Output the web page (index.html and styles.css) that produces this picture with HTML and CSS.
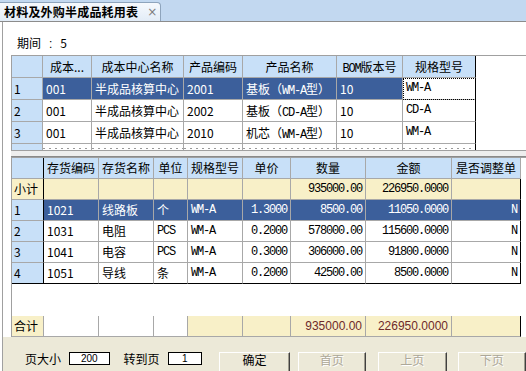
FILE: index.html
```html
<!DOCTYPE html>
<html lang="zh-CN">
<head>
    <meta charset="UTF-8">
    <title>材料及外购半成品耗用表</title>
    <link rel="stylesheet" href="styles.css">
</head>
<body>
<div class="tabbar">
    <div class="tab">
        <span class="tab-title">材料及外购半成品耗用表</span>
        <span class="tab-close">×</span>
    </div>
</div>

<div class="panel">
    <div class="period">期间<span class="colon">:</span>5</div>

    <div class="grid top">
        <div class="row head">
            <div class="cell"></div>
            <div class="cell">成本...</div>
            <div class="cell">成本中心名称</div>
            <div class="cell">产品编码</div>
            <div class="cell">产品名称</div>
            <div class="cell"><span class="mono">BOM</span>版本号</div>
            <div class="cell last">规格型号</div>
        </div>
        <div class="row selected">
            <div class="cell rh">1</div>
            <div class="cell">001</div>
            <div class="cell">半成品核算中心</div>
            <div class="cell">2001</div>
            <div class="cell">基板（<span class="mono">WM-A</span>型）</div>
            <div class="cell">10</div>
            <div class="cell last focus mono">WM-A</div>
        </div>
        <div class="row">
            <div class="cell rh">2</div>
            <div class="cell">001</div>
            <div class="cell">半成品核算中心</div>
            <div class="cell">2002</div>
            <div class="cell">基板（<span class="mono">CD-A</span>型）</div>
            <div class="cell">10</div>
            <div class="cell last mono">CD-A</div>
        </div>
        <div class="row">
            <div class="cell rh">3</div>
            <div class="cell">001</div>
            <div class="cell">半成品核算中心</div>
            <div class="cell">2010</div>
            <div class="cell">机芯（<span class="mono">WM-A</span>型）</div>
            <div class="cell">10</div>
            <div class="cell last mono">WM-A</div>
        </div>
        <div class="row peek">
            <div class="cell rh"></div>
            <div class="cell"></div>
            <div class="cell"></div>
            <div class="cell"></div>
            <div class="cell"></div>
            <div class="cell"></div>
            <div class="cell last"></div>
        </div>
    </div>

    <div class="splitter"></div>

    <div class="grid bottom">
        <div class="row head">
            <div class="cell rh"></div>
            <div class="cell">存货编码</div>
            <div class="cell">存货名称</div>
            <div class="cell">单位</div>
            <div class="cell">规格型号</div>
            <div class="cell">单价</div>
            <div class="cell">数量</div>
            <div class="cell">金额</div>
            <div class="cell">是否调整单</div>
        </div>
        <div class="row subtotal">
            <div class="cell rh">小计</div>
            <div class="cell"></div>
            <div class="cell"></div>
            <div class="cell"></div>
            <div class="cell"></div>
            <div class="cell"></div>
            <div class="cell num mono">935000.00</div>
            <div class="cell num mono">226950.0000</div>
            <div class="cell last"></div>
        </div>
        <div class="row selected">
            <div class="cell rh">1</div>
            <div class="cell">1021</div>
            <div class="cell">线路板</div>
            <div class="cell">个</div>
            <div class="cell mono">WM-A</div>
            <div class="cell num mono">1.3000</div>
            <div class="cell num mono">8500.00</div>
            <div class="cell num mono">11050.0000</div>
            <div class="cell num mono last">N</div>
        </div>
        <div class="row">
            <div class="cell rh">2</div>
            <div class="cell">1031</div>
            <div class="cell">电阻</div>
            <div class="cell mono">PCS</div>
            <div class="cell mono">WM-A</div>
            <div class="cell num mono">0.2000</div>
            <div class="cell num mono">578000.00</div>
            <div class="cell num mono">115600.0000</div>
            <div class="cell num mono last">N</div>
        </div>
        <div class="row">
            <div class="cell rh">3</div>
            <div class="cell">1041</div>
            <div class="cell">电容</div>
            <div class="cell mono">PCS</div>
            <div class="cell mono">WM-A</div>
            <div class="cell num mono">0.3000</div>
            <div class="cell num mono">306000.00</div>
            <div class="cell num mono">91800.0000</div>
            <div class="cell num mono last">N</div>
        </div>
        <div class="row end">
            <div class="cell rh">4</div>
            <div class="cell">1051</div>
            <div class="cell">导线</div>
            <div class="cell">条</div>
            <div class="cell mono">WM-A</div>
            <div class="cell num mono">0.2000</div>
            <div class="cell num mono">42500.00</div>
            <div class="cell num mono">8500.0000</div>
            <div class="cell num mono last">N</div>
        </div>

        <div class="spacer"></div>

        <div class="row total">
            <div class="cell rh">合计</div>
            <div class="cell blank"></div>
            <div class="cell blank"></div>
            <div class="cell blank"></div>
            <div class="cell"></div>
            <div class="cell"></div>
            <div class="cell num">935000.00</div>
            <div class="cell num">226950.0000</div>
            <div class="cell last"></div>
        </div>
    </div>

    <div class="pager">
        <span class="label">页大小</span>
        <span class="box size">200</span>
        <span class="label goto">转到页</span>
        <span class="box page">1</span>
        <span class="btn ok">确定</span>
        <span class="btn off first">首页</span>
        <span class="btn off prev">上页</span>
        <span class="btn off next">下页</span>
    </div>
</div>
</body>
</html>
```

FILE: styles.css
```css
body {
    margin: 0;
    width: 526px;
    height: 371px;
    overflow: hidden;
    background: #fff;
    font-family: "Noto Sans CJK SC", sans-serif;
    font-size: 12px;
    color: #000;
}

.tabbar {
    height: 21px;
    background: #c2d8f0;
    border-bottom: 1px solid #8c8c8c;
    display: flex;
    align-items: flex-end;
}
.tab {
    width: 161px;
    height: 19px;
    box-sizing: border-box;
    padding-left: 4px;
    background: linear-gradient(#f6f9fd, #e2ecf7);
    border: 1px solid #8ea4bc;
    border-left: none;
    border-bottom: none;
    border-radius: 0 4px 0 0;
    display: flex;
    align-items: center;
}
.tab-title {
    font-weight: bold;
    line-height: 16px;
    letter-spacing: 0.2px;
}
.tab-close {
    margin-left: 9px;
    color: #7d7d7d;
    font-family: "DejaVu Sans", sans-serif;
    font-size: 12px;
    line-height: 16px;
}

.panel {
    margin-left: 2px;
    border-left: 1px solid #a0a0a0;
    height: 349px;
    display: flex;
    flex-direction: column;
}
.period {
    height: 33px;
    box-sizing: border-box;
    padding: 13px 0 0 14px;
    line-height: 16px;
}
.period .colon {
    font-family: "Liberation Sans", sans-serif;
    margin: 0 8px 0 8px;
}

.grid {
    margin-left: 8px;
    border-top: 1px solid #a0a0a0;
    border-left: 1px solid #a0a0a0;
    overflow: hidden;
    background: #fff;
}
.grid.top {
    height: 95px;
    box-sizing: border-box;
}
.grid.bottom {
    height: 180px;
    box-sizing: border-box;
    display: flex;
    flex-direction: column;
}

.row {
    display: grid;
    height: 22px;
}
.top .row {
    grid-template-columns: 31px 49px 92px 59px 94px 66px 73px;
}
.top .row.peek {
    height: 6px;
}
.top .peek .cell {
    border-bottom: none;
    background-image: radial-gradient(circle, #999 0.6px, transparent 0.8px);
    background-size: 6px 3px;
    background-position: 4px 3px;
    background-repeat: repeat-x;
}
.top .peek .rh {
    background-image: none;
}
.bottom .row {
    grid-template-columns: 32px 55px 55px 34px 55px 48px 75px 86px 69px;
    height: 21px;
    flex: none;
}

.cell {
    box-sizing: border-box;
    border-right: 1px solid #a8a8a8;
    border-bottom: 1px solid #a8a8a8;
    padding: 0 3px;
    line-height: 21px;
    white-space: nowrap;
    overflow: hidden;
}
.bottom .cell {
    line-height: 20px;
}
.mono {
    font-family: "Liberation Mono", monospace;
    font-size: 12px;
    letter-spacing: -1.2px;
}
.num {
    text-align: right;
    padding-right: 3px;
}

.head .cell {
    background: #c8e0f8;
    text-align: center;
}
.rh {
    background: #c8e0f8;
    padding-left: 2px;
}
.top .last {
    border-right-color: #000;
}

.selected .cell {
    background: #3c5f9b;
    color: #fff;
}
.selected .rh {
    background: #c8e0f8;
    color: #000;
}
.selected .focus {
    background: #fff;
    color: #000;
    outline: 1px dotted #000;
    outline-offset: -1px;
}

.bottom .head .cell:first-child,
.bottom .rh {
    border-right-color: #000;
}
.bottom .row:not(.head):not(.total) .last {
    border-right-color: #000;
}
.bottom .end .cell {
    border-bottom-color: #000;
}

.subtotal .cell,
.subtotal .rh {
    background: #f8f0c8;
}

.spacer {
    flex: 1;
}

.total .cell {
    background: #f8f0c8;
    color: #6e2a2a;
    font-family: "Liberation Sans", sans-serif;
}
.total .rh {
    font-family: "Noto Sans CJK SC", sans-serif;
    color: #000;
    border-right-color: #a8a8a8;
}
.total .blank {
    background: #fff;
}
.total .last {
    border-right-color: #000;
}

.splitter {
    margin-left: 8px;
    height: 7px;
    box-sizing: border-box;
    border-top: 1px solid #a0a0a0;
    border-bottom: 1px solid #8a8a8a;
    background: #eeeeee;
}

.pager {
    height: 34px;
    box-sizing: border-box;
    background: #ece9d8;
    padding: 15px 0 0 22px;
    display: flex;
    align-items: flex-start;
    white-space: nowrap;
}
.label {
    width: 36px;
    line-height: 14px;
}
.box {
    height: 13px;
    box-sizing: border-box;
    margin-left: 8px;
    background: #fff;
    border: 1px solid #000;
    font-family: "Liberation Sans", sans-serif;
    font-size: 10px;
    line-height: 11px;
    text-align: center;
}
.size {
    width: 42px;
}
.goto {
    margin-left: 14px;
}
.page {
    width: 36px;
}
.btn {
    height: 22px;
    width: 73px;
    box-sizing: border-box;
    background: #ece9d8;
    border: 1px solid;
    border-color: #fff #404040 #404040 #fff;
    box-shadow: inset -1px -1px #9d9a8d;
    text-align: center;
    line-height: 14px;
}
.ok {
    margin-left: 17px;
}
.first {
    margin-left: 8px;
    width: 71px;
}
.prev {
    margin-left: 12px;
    width: 71px;
}
.next {
    margin-left: 11px;
    width: 71px;
}
.off {
    color: #aca899;
    text-shadow: 1px 1px #fff;
}
```
